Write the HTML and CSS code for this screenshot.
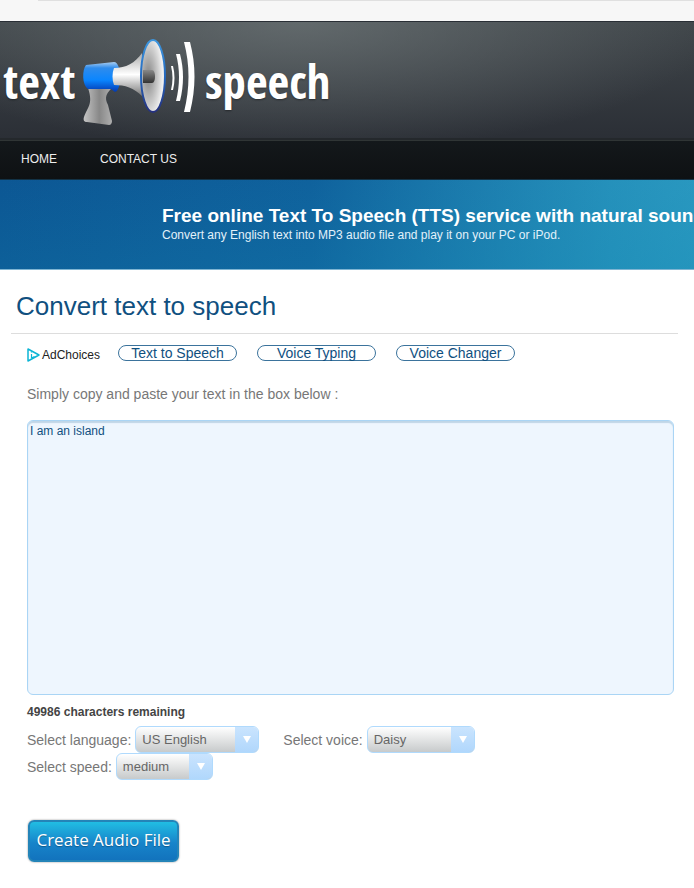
FILE: index.html
```
<!DOCTYPE html>
<html lang="en">
<head>
    <meta charset="UTF-8">
    <meta name="viewport" content="width=device-width, initial-scale=1.0">
    <title>Text to Speech</title>
    <link rel="stylesheet" href="styles.css">
</head>
<body>
    <div class="top-strip"></div>

    <header class="header">
        <a class="logo" href="#">
            <span class="logo-text">text</span>
            <svg width="130" height="105" viewBox="0 0 130 105" aria-hidden="true">
                <defs>
                    <linearGradient id="body" x1="0" y1="0" x2="0" y2="1">
                        <stop offset="0" stop-color="#a9cdf0"/>
                        <stop offset=".2" stop-color="#2f8cec"/>
                        <stop offset=".6" stop-color="#0a86ff"/>
                        <stop offset="1" stop-color="#0338b0"/>
                    </linearGradient>
                    <linearGradient id="cone" x1="0" y1="0" x2="0" y2="1">
                        <stop offset="0" stop-color="#aaa"/>
                        <stop offset=".5" stop-color="#fff"/>
                        <stop offset="1" stop-color="#777"/>
                    </linearGradient>
                    <linearGradient id="grip" x1="0" y1="0" x2="1" y2="0">
                        <stop offset="0" stop-color="#c4c4c4"/>
                        <stop offset=".5" stop-color="#888"/>
                        <stop offset="1" stop-color="#b8b8b8"/>
                    </linearGradient>
                    <linearGradient id="rim" x1="0" y1="0" x2="0" y2="1">
                        <stop offset="0" stop-color="#3d97e0"/>
                        <stop offset=".5" stop-color="#2468bd"/>
                        <stop offset="1" stop-color="#25307e"/>
                    </linearGradient>
                    <radialGradient id="dish" cx=".3" cy=".5" r=".6">
                        <stop offset="0" stop-color="#858585"/>
                        <stop offset="1" stop-color="#eee"/>
                    </radialGradient>
                    <linearGradient id="core" x1="0" y1="0" x2="0" y2="1">
                        <stop offset="0" stop-color="#888"/>
                        <stop offset="1" stop-color="#333"/>
                    </linearGradient>
                </defs>
                <path d="M12 56h28c-9 8-11 12-7 20l4 16c0 2-1 4-3 4l-22-3c-3 0-4-2-3-5 4-11 10-13 3-32z" fill="url(#grip)"/>
                <path d="M11 36l28-3c8 0 8 29 1 30l-4-3H13c-6-4-6-19-2-24z" fill="url(#body)"/>
                <path d="M39 39c12 0 21-5 28-15v43c-8-8-17-11-28-11-2-5-2-12 0-17z" fill="url(#cone)"/>
                <ellipse cx="78" cy="47" rx="12" ry="36" fill="url(#dish)" stroke="url(#rim)" stroke-width="2"/>
                <path d="M68 41h9c4 0 4 13 0 13h-9z" fill="url(#core)"/>
                <path d="M96 37c2 8 2 16 0 24h2c2-8 2-16 0-24zM101 25c4 15 4 31 0 47h4c4-16 4-32 0-47zM109 13c6 23 6 46 0 70h6c6-24 6-47 0-70z" fill="#fff"/>
            </svg>
            <span>speech</span>
        </a>
    </header>

    <nav class="nav">
        <a href="#">HOME</a>
        <a href="#">CONTACT US</a>
    </nav>

    <div class="banner">
        <h2>Free online Text To Speech (TTS) service with natural sounding voices</h2>
        <p>Convert any English text into MP3 audio file and play it on your PC or iPod.</p>
    </div>

    <main class="content">
        <h1>Convert text to speech</h1>

        <div class="panel">
            <div class="links">
                <a class="adchoices" href="#">
                    <svg width="13" height="14" viewBox="0 0 13 14" aria-hidden="true">
                        <path d="M1 1v12l11-6z" fill="#fff" stroke="#0db5d5" stroke-width="1.5" stroke-linejoin="round"/>
                        <path d="M4.500 6v4M4.500 3.500v1M4.500 10l3-1.500" fill="none" stroke="#0db5d5" stroke-width="1.200"/>
                    </svg>
                    AdChoices
                </a>
                <a class="pill" href="#">Text to Speech</a>
                <a class="pill" href="#">Voice Typing</a>
                <a class="pill" href="#">Voice Changer</a>
            </div>

            <form>
                <label class="intro" for="text">Simply copy and paste your text in the box below :</label>
                <textarea id="text">I am an island</textarea>
                <p class="remaining">49986 characters remaining</p>

                <div class="row">
                    <label for="language">Select language:</label>
                    <div class="select language">
                        <select id="language"><option>US English</option></select>
                    </div>
                    <label class="voice-label" for="voice">Select voice:</label>
                    <div class="select voice">
                        <select id="voice"><option>Daisy</option></select>
                    </div>
                </div>
                <div class="row">
                    <label for="speed">Select speed:</label>
                    <div class="select speed">
                        <select id="speed"><option>medium</option></select>
                    </div>
                </div>

                <button class="create" type="button">Create Audio File</button>
            </form>
        </div>
    </main>
</body>
</html>
```

FILE: styles.css
```
* {
    box-sizing: border-box;
}

body {
    margin: 0;
    background-color: #fff;
    font-family: "Liberation Sans", Arial, sans-serif;
    font-size: 14px;
    color: #777;
}

a {
    color: inherit;
    text-decoration: none;
}

.top-strip {
    height: 21px;
    background: linear-gradient(#e0e0e0, #e0e0e0) 38px 0 / 100% 1px no-repeat #f7f7f7;
}

.header {
    height: 119px;
    padding: 2px 0 0 3px;
    border-top: 1px solid #292e35;
    border-bottom: 2px solid #24282c;
    background:
        radial-gradient(ellipse 420px 130px at 300px 0, rgba(112, 120, 122, 0.7), rgba(70, 78, 82, 0) 100%),
        linear-gradient(#40464a, #2b2f36);
    overflow: hidden;
}

.logo {
    display: flex;
    align-items: center;
    height: 114px;
    color: #fff;
    font-family: "Open Sans Condensed", "Roboto Condensed", "Liberation Sans", sans-serif;
    font-size: 47px;
    font-weight: bold;
    line-height: 60px;
    text-shadow: 0 1px 2px rgba(0, 0, 0, 0.4);
}

.logo svg {
    flex: none;
}

.logo-text {
    width: 72px;
}

.nav {
    display: flex;
    gap: 43px;
    height: 40px;
    padding-left: 21px;
    border-top: 1px solid #303535;
    border-bottom: 1px solid #123246;
    background: linear-gradient(#14181b, #0e1113);
    color: #eee;
    font-size: 12px;
    line-height: 37px;
}

.banner {
    height: 90px;
    padding: 24px 0 0 162px;
    border-bottom: 1px solid #7fb5d3;
    background:
        linear-gradient(170deg, rgba(5, 90, 150, 0), rgba(18, 140, 180, 0.4)),
        linear-gradient(90deg, #0c5794, #0f5d9a 45%, #2a92bd 88%, #309bc3);
    color: #fff;
    white-space: nowrap;
    overflow: hidden;
}

.banner h2 {
    margin: 0;
    font-size: 19px;
    line-height: 24px;
}

.banner p {
    margin: 0;
    color: #e2f1fa;
    font-size: 12px;
    line-height: 14px;
}

.content {
    padding: 20px 16px 26px 11px;
}

h1 {
    margin: 0;
    padding: 0 5px 10px;
    border-bottom: 1px solid #ddd;
    color: #10507f;
    font-size: 26px;
    font-weight: normal;
    line-height: 33px;
}

.panel {
    padding: 11px 4px 0 16px;
}

.links {
    display: flex;
    gap: 20px;
    height: 16px;
}

.adchoices {
    display: flex;
    align-items: center;
    gap: 2px;
    width: 71px;
    height: 19px;
    color: #222;
    font-size: 12px;
}

.adchoices svg {
    flex: none;
}

.pill {
    width: 119px;
    border: 1px solid #3b739c;
    border-radius: 8px;
    color: #10507f;
    text-align: center;
    line-height: 14px;
}

.intro {
    display: block;
    margin-top: 24px;
    line-height: 18px;
}

textarea {
    display: block;
    width: 100%;
    height: 275px;
    margin-top: 17px;
    padding: 3px 2px;
    border: 1px solid #aad5f5;
    border-radius: 6px;
    outline: none;
    background-color: #eef6fe;
    box-shadow: inset 0 2px 1px #c0d6e7;
    color: #10507f;
    font-family: inherit;
    font-size: 12px;
    resize: none;
}

.remaining {
    margin: 10px 0 6px;
    color: #444;
    font-size: 12px;
    font-weight: bold;
    line-height: 15px;
}

.row {
    display: flex;
    align-items: center;
    gap: 4px;
    height: 27px;
}

.voice-label {
    margin-left: 20px;
}

.select {
    position: relative;
    height: 27px;
    border: 1px solid #b0dafd;
    border-radius: 6px;
    background: linear-gradient(#fff, #c7cacb);
    overflow: hidden;
}

.select::after {
    content: "";
    position: absolute;
    top: 9px;
    right: 7px;
    border: 4px solid transparent;
    border-top: 7px solid #fff;
    border-bottom: 0;
    pointer-events: none;
}

.select select {
    width: 100%;
    height: 25px;
    padding: 0 24px 0 6px;
    border: 0;
    outline: none;
    appearance: none;
    background: linear-gradient(#cae4fe, #b0d7fc) right / 23px 100% no-repeat;
    color: #666;
    font-family: inherit;
    font-size: 13px;
}

.language {
    width: 124px;
}

.voice {
    width: 108px;
}

.speed {
    width: 97px;
}

.create {
    display: block;
    width: 151px;
    height: 42px;
    margin: 40px 0 0 1px;
    padding: 0 0 3px;
    border: 2px solid #2484b8;
    border-radius: 6px;
    background: linear-gradient(#21bde3, #1784ca 55%, #1273bd);
    box-shadow: 0 0 2px #888;
    color: #fff;
    font-family: "Open Sans", sans-serif;
    font-size: 17px;
    text-shadow: 0 1px 1px rgba(0, 0, 0, 0.3);
    white-space: nowrap;
}
```
